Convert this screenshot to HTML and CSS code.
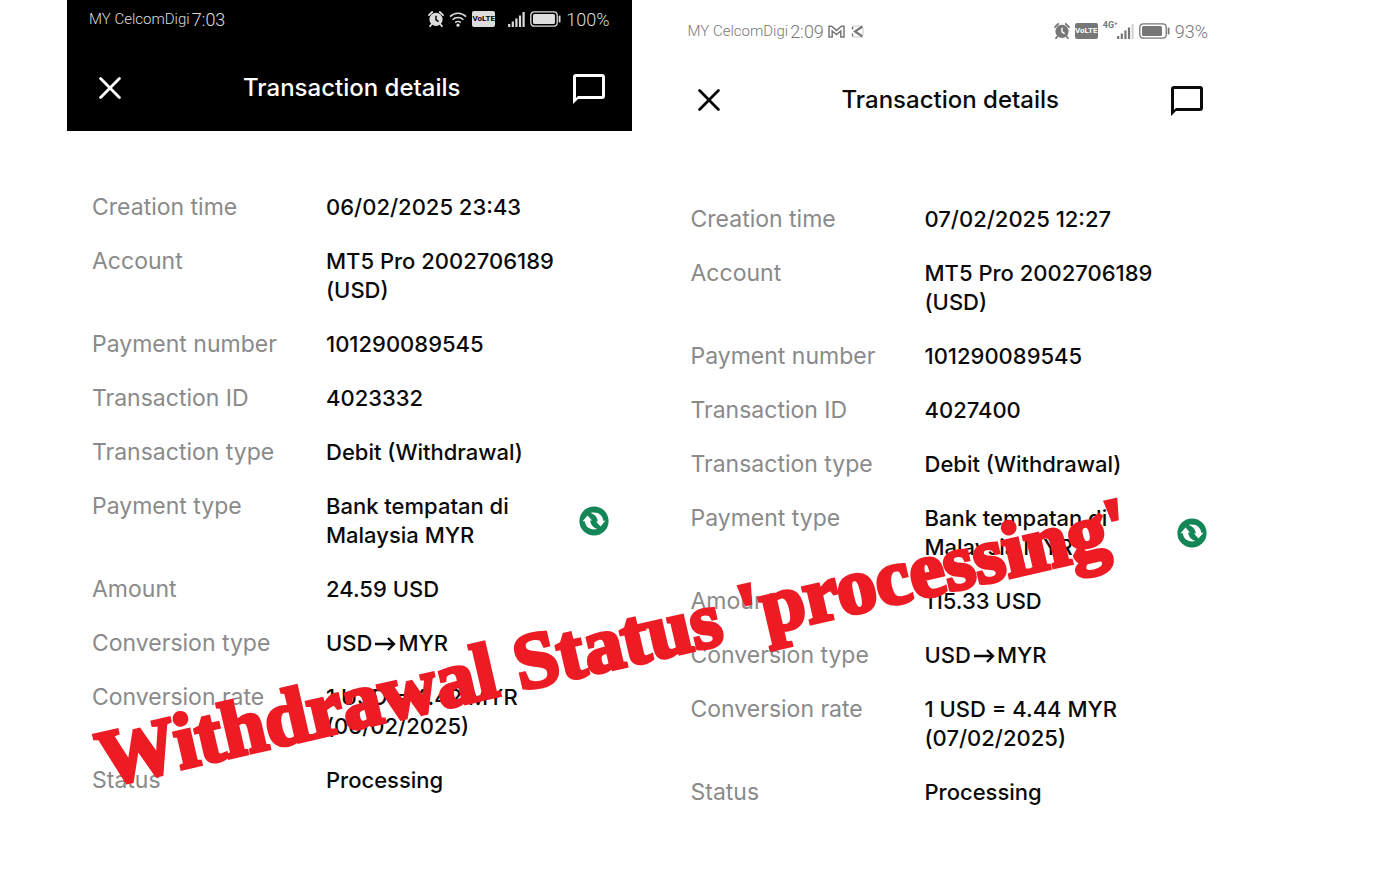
FILE: index.html
```html
<!DOCTYPE html>
<html lang="en">
<head>
  <meta charset="UTF-8" />
  <meta name="viewport" content="width=device-width, initial-scale=1.0"/>
  <title>Transaction details</title>
  <link rel="stylesheet" href="styles.css">
</head>
<body>

<!-- Shared icons -->
<svg class="sprite" aria-hidden="true">
  <symbol id="alarm" viewBox="0 0 16 16">
    <path d="M1 4.2 4.2 1M15 4.2 11.8 1M3.6 13.2 2 15.2M12.4 13.2 14 15.2" stroke="currentColor" stroke-width="1.8" stroke-linecap="round"/>
    <circle cx="8" cy="8.4" r="6.6" fill="currentColor"/>
    <path d="M8 4.8v4l2.6 1.8" fill="none" stroke="var(--bar)" stroke-width="1.4"/>
  </symbol>
  <symbol id="close" viewBox="0 0 22 22">
    <path d="M1.6 1.6 20.4 20.4M20.4 1.6 1.6 20.4" stroke="currentColor" stroke-width="2.8" stroke-linecap="round"/>
  </symbol>
  <symbol id="chat" viewBox="0 0 32 32">
    <path d="M3 2h26a3 3 0 0 1 3 3v19a3 3 0 0 1-3 3H5l-5 5V5a3 3 0 0 1 3-3zm0 3v21l2-2h24V5z" fill="currentColor" fill-rule="evenodd"/>
  </symbol>
  <symbol id="battery" viewBox="0 0 31 16">
    <rect x=".8" y=".8" width="26.4" height="14.4" rx="3.4" fill="none" stroke="currentColor" stroke-width="1.3"/>
    <path d="M29.6 4.6v6.8" stroke="currentColor" stroke-width="1.8"/>
  </symbol>
  <symbol id="arrow" viewBox="0 0 22 16">
    <path d="M1 8h19M14 2l6 6-6 6" fill="none" stroke="currentColor" stroke-width="2.4"/>
  </symbol>
  <symbol id="exchange" viewBox="0 0 30 30">
    <circle cx="15" cy="15" r="14.6" fill="#128656"/>
    <path id="swoosh" d="M8.5 9.4 13 14.6H11.2C11.4 18 13.6 21.4 18.3 23 11.500 24.600 6.300 21 5.800 15.200H3.600z" fill="#fff"/>
    <use href="#swoosh" transform="rotate(180 15 15)"/>
  </symbol>
</svg>

<main class="board">

  <section class="phone">
    <div class="top dark">
      <div class="status-bar">
        <span class="carrier">MY CelcomDigi</span>
        <span class="time">7:03</span>
        <div class="indicators">
          <svg class="alarm"><use href="#alarm"/></svg>
          <svg class="wifi" viewBox="0 0 18 16">
            <path d="M1 5.6a11.4 11.4 0 0 1 16 0M3.6 8.8a7.6 7.6 0 0 1 10.8 0M6.2 11.6a4 4 0 0 1 5.6 0" fill="none" stroke="currentColor" stroke-width="1.6"/>
            <circle cx="9" cy="14.2" r="1.6" fill="currentColor"/>
          </svg>
          <span class="volte">VoLTE</span>
          <svg class="signal spaced" viewBox="0 0 17 16">
            <path d="M1.2 13v3M4.8 10.5V16M8.4 7.5V16M12 4.5V16M15.6 1v15" stroke="currentColor" stroke-width="2.2"/>
          </svg>
          <svg class="battery" viewBox="0 0 31 16">
            <use href="#battery"/>
            <rect x="3" y="3" width="22" height="10" rx="1.5" fill="currentColor"/>
          </svg>
          <span class="percent">100%</span>
        </div>
      </div>
      <header class="app-bar">
        <button class="close" aria-label="Close"><svg><use href="#close"/></svg></button>
        <h2>Transaction details</h2>
        <button class="chat" aria-label="Chat"><svg><use href="#chat"/></svg></button>
      </header>
    </div>

    <dl class="details">
      <div class="row"><dt>Creation time</dt><dd>06/02/2025 23:43</dd></div>
      <div class="row"><dt>Account</dt><dd>MT5 Pro 2002706189 (USD)</dd></div>
      <div class="row"><dt>Payment number</dt><dd>101290089545</dd></div>
      <div class="row"><dt>Transaction ID</dt><dd>4023332</dd></div>
      <div class="row"><dt>Transaction type</dt><dd>Debit (Withdrawal)</dd></div>
      <div class="row"><dt>Payment type</dt><dd>Bank tempatan di Malaysia MYR</dd><dd class="method"><svg><use href="#exchange"/></svg></dd></div>
      <div class="row"><dt>Amount</dt><dd>24.59 USD</dd></div>
      <div class="row"><dt>Conversion type</dt><dd class="pair">USD <svg><use href="#arrow"/></svg> MYR</dd></div>
      <div class="row"><dt>Conversion rate</dt><dd>1 USD = 4.42 MYR (06/02/2025)</dd></div>
      <div class="row"><dt>Status</dt><dd>Processing</dd></div>
    </dl>
  </section>

  <section class="phone lower">
    <div class="top">
      <div class="status-bar">
        <span class="carrier">MY CelcomDigi</span>
        <span class="time">2:09</span>
        <svg class="mail" viewBox="0 0 17 13">
          <path d="M1 12V1.2h2.6L8.5 5.4 13.4 1.2H16V12h-3.2V6L8.5 9.6 4.2 6v6z" fill="none" stroke="currentColor" stroke-width="1.5"/>
        </svg>
        <svg class="mail app-k" viewBox="0 0 13 13">
          <path d="M11.5 1.5 4 6.5l7.5 5" fill="none" stroke="currentColor" stroke-width="2.2"/>
          <path d="M1.5 1.5v10" stroke="currentColor" stroke-width="1.4" stroke-dasharray="3 4"/>
          <path d="M2 1h9M2 12h9M12 3v7" stroke="currentColor" stroke-width="1" opacity=".4"/>
        </svg>
        <div class="indicators">
          <svg class="alarm"><use href="#alarm"/></svg>
          <span class="volte">VoLTE</span>
          <span class="network">4G⁺</span>
          <svg class="signal" viewBox="0 0 17 16">
            <path d="M1.2 13v3M4.8 10.5V16M8.4 7.5V16M12 4.5V16" stroke="currentColor" stroke-width="2.2"/>
            <path d="M15.6 1v15" stroke="currentColor" stroke-width="2.2" opacity=".3"/>
          </svg>
          <svg class="battery" viewBox="0 0 31 16">
            <use href="#battery"/>
            <rect x="3" y="3" width="20" height="10" rx="1.5" fill="currentColor"/>
          </svg>
          <span class="percent">93%</span>
        </div>
      </div>
      <header class="app-bar">
        <button class="close" aria-label="Close"><svg><use href="#close"/></svg></button>
        <h2>Transaction details</h2>
        <button class="chat" aria-label="Chat"><svg><use href="#chat"/></svg></button>
      </header>
    </div>

    <dl class="details">
      <div class="row"><dt>Creation time</dt><dd>07/02/2025 12:27</dd></div>
      <div class="row"><dt>Account</dt><dd>MT5 Pro 2002706189 (USD)</dd></div>
      <div class="row"><dt>Payment number</dt><dd>101290089545</dd></div>
      <div class="row"><dt>Transaction ID</dt><dd>4027400</dd></div>
      <div class="row"><dt>Transaction type</dt><dd>Debit (Withdrawal)</dd></div>
      <div class="row"><dt>Payment type</dt><dd>Bank tempatan di Malaysia MYR</dd><dd class="method"><svg><use href="#exchange"/></svg></dd></div>
      <div class="row"><dt>Amount</dt><dd>115.33 USD</dd></div>
      <div class="row"><dt>Conversion type</dt><dd class="pair">USD <svg><use href="#arrow"/></svg> MYR</dd></div>
      <div class="row"><dt>Conversion rate</dt><dd>1 USD = 4.44 MYR (07/02/2025)</dd></div>
      <div class="row"><dt>Status</dt><dd>Processing</dd></div>
    </dl>
  </section>

  <p class="stamp">Withdrawal Status 'processing'</p>
</main>

</body>
</html>
```
FILE: styles.css
```css
* {
  box-sizing: border-box;
  margin: 0;
  padding: 0;
}

body {
  font-family: Inter, sans-serif;
  font-size: 22px;
  background: #fff;
  color: #0a0a0a;
}

.sprite {
  position: absolute;
  width: 0;
  height: 0;
}

svg {
  display: block;
  flex: none;
}

.board {
  position: relative;
  display: grid;
  grid-template-columns: 1fr 1fr;
  gap: 34px;
  padding: 0 160px 0 67px;
}

.lower {
  padding-top: 12px;
}

.top {
  --bar: #fff;
  --status: #777;
  background: var(--bar);
}

.dark {
  --bar: #000;
  --status: #ddd;
  color: #fff;
}

/* Phone status bar */
.status-bar {
  display: flex;
  align-items: center;
  gap: 2px;
  height: 38px;
  padding: 0 22px;
  font-family: Roboto, sans-serif;
  font-weight: 300;
  color: var(--status);
}

.carrier {
  font-size: 15px;
}

.time,
.percent {
  font-size: 18px;
}

.mail {
  width: 17px;
  height: 13px;
  margin-left: 2px;
}

.app-k {
  width: 13px;
  margin-left: 4px;
}

.indicators {
  display: flex;
  align-items: center;
  gap: 5px;
  margin-left: auto;
}

.alarm {
  width: 16px;
  height: 16px;
}

.wifi {
  width: 18px;
  height: 16px;
}

.volte {
  width: 23px;
  border-radius: 2px;
  background: var(--status);
  color: var(--bar);
  font-size: 8px;
  font-weight: 700;
  line-height: 16px;
  text-align: center;
}

.network {
  align-self: flex-start;
  margin-right: -6px;
  font-size: 9px;
  line-height: 9px;
  font-weight: 700;
}

.signal {
  width: 17px;
  height: 16px;
}

.spaced {
  margin-left: 8px;
}

.battery {
  width: 31px;
  height: 16px;
}

/* App header */
.app-bar {
  display: grid;
  grid-template-columns: 1fr auto 1fr;
  align-items: center;
  padding: 34px 27px 27px 32px;
}

.app-bar h2 {
  font-size: 24px;
  font-weight: 500;
  line-height: 32px;
}

button {
  border: none;
  background: none;
  color: inherit;
  cursor: pointer;
}

.close svg {
  width: 22px;
  height: 22px;
}

.chat {
  justify-self: end;
}

.chat svg {
  width: 32px;
  height: 32px;
}

/* Transaction rows */
.details {
  display: grid;
  gap: 25px;
  padding: 62px 23px 80px 25px;
  line-height: 29px;
}

.row {
  display: grid;
  grid-template-columns: 234px 1fr 30px;
}

dt {
  font-size: 23px;
  color: #8a8a8a;
}

dd {
  font-weight: 500;
}

.method {
  align-self: center;
}

.method svg {
  width: 30px;
  height: 30px;
}

.pair {
  display: flex;
  align-items: center;
  gap: 2px;
}

.pair svg {
  width: 22px;
  height: 16px;
}

.stamp {
  position: absolute;
  left: 108px;
  top: 720px;
  font-family: "Liberation Serif", serif;
  font-size: 79px;
  font-weight: 700;
  line-height: 80px;
  color: #ed1c24;
  -webkit-text-stroke: 4px #ed1c24;
  white-space: nowrap;
  transform: rotate(-13deg);
  transform-origin: left bottom;
  pointer-events: none;
}
```
